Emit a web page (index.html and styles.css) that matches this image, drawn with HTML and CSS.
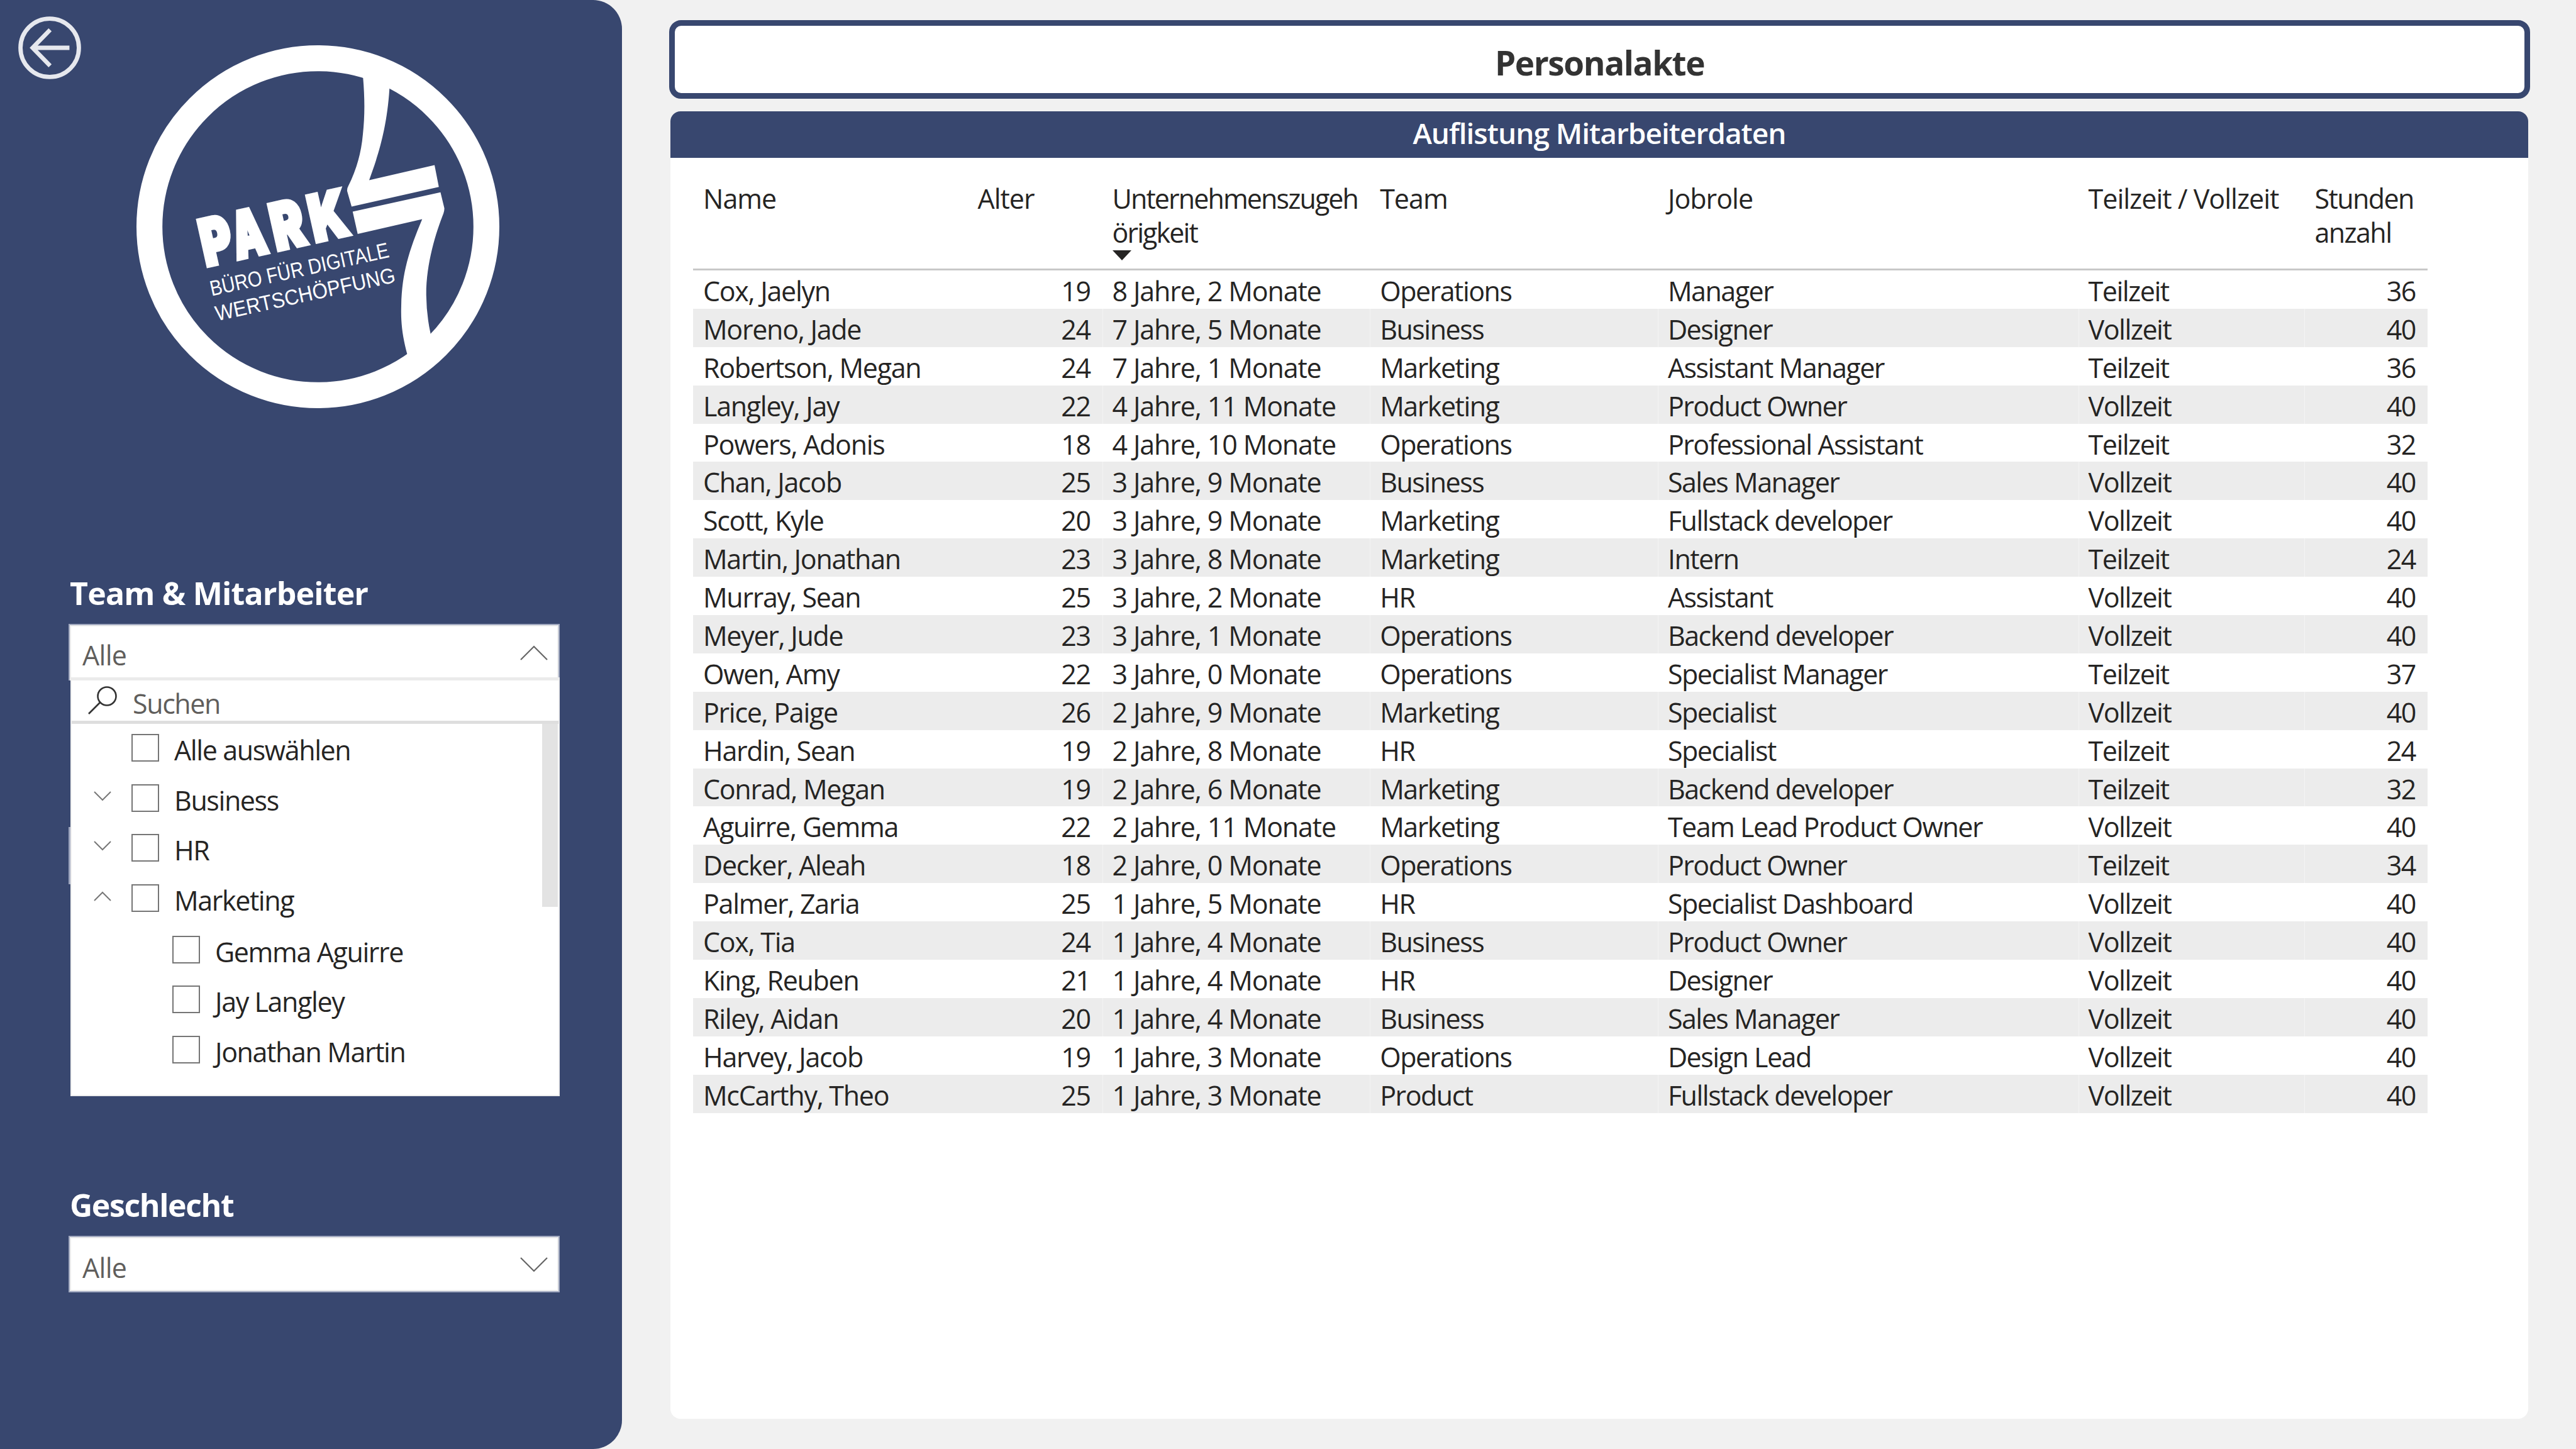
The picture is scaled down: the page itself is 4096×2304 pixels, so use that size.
FILE: index.html
```html
<!DOCTYPE html>
<html lang="de">
<head>
<meta charset="utf-8">
<title>Personalakte</title>
<link rel="stylesheet" href="styles.css">
</head>
<body>
<div class="report">
  <aside class="sidebar">
    <div class="brand">
      <svg class="back" viewBox="0 0 140 140" fill="none">
        <circle cx="70" cy="70" r="65"/>
        <path d="M114 70H31M71 30L32 70L71 110"/>
      </svg>
      <svg class="logo" viewBox="305 101 812 812">
        <circle class="ring" cx="711" cy="507" r="377"/>
        <path d="M812 173C816 220 816 260 811.600 300C808 342 797 380 779 416Q776 421 776.400 427L786.400 462L981.600 418L972 369L825.700 402.700C845 350 865 290 871 200L872 165L811 140Z"/>
        <path d="M788.800 473.300L985.300 430L994 466Q994 472 992 477C975 520 953 590 953.400 660Q954 705 963 746L965 790L911 830L911 793C901 755 896 725 897.500 683C899 610 915 560 944.300 490L800 523.300Z"/>
        <text class="wordmark" transform="translate(461 595) rotate(-12.500)"><tspan x="-1" textLength="69" lengthAdjust="spacingAndGlyphs">P</tspan><tspan x="71" textLength="74" lengthAdjust="spacingAndGlyphs">A</tspan><tspan x="161" textLength="73" lengthAdjust="spacingAndGlyphs">R</tspan><tspan x="249" textLength="83" lengthAdjust="spacingAndGlyphs">K</tspan></text>
        <text class="claim" transform="translate(473 662) rotate(-12.300)" textLength="409" lengthAdjust="spacingAndGlyphs">BÜRO FÜR DIGITALE</text>
        <text class="claim" transform="translate(485 718) rotate(-12.300)" textLength="411" lengthAdjust="spacingAndGlyphs">WERTSCHÖPFUNG</text>
      </svg>
    </div>

    <section class="slicer team">
      <h2>Team &amp; Mitarbeiter</h2>
      <div class="select"><span>Alle</span><svg class="caret" viewBox="0 0 44 24"><path d="M1 23L22 2L43 23"/></svg></div>
      <div class="popup">
        <div class="search"><svg class="glass" viewBox="0 0 48 48"><circle cx="31" cy="17" r="14.500"/><path d="M20 27L2 45"/></svg><span>Suchen</span></div>
        <div class="list">
          <ul class="items">
            <li><i class="exp"></i><i class="box"></i><span>Alle auswählen</span></li>
            <li><svg class="exp" viewBox="0 0 28 16"><path d="M1 1L14 14L27 1"/></svg><i class="box"></i><span>Business</span></li>
            <li><svg class="exp" viewBox="0 0 28 16"><path d="M1 1L14 14L27 1"/></svg><i class="box"></i><span>HR</span></li>
            <li><svg class="exp" viewBox="0 0 28 16"><path d="M1 15L14 2L27 15"/></svg><i class="box"></i><span>Marketing</span></li>
            <li class="child"><i class="box"></i><span>Gemma Aguirre</span></li>
            <li class="child"><i class="box"></i><span>Jay Langley</span></li>
            <li class="child"><i class="box"></i><span>Jonathan Martin</span></li>
          </ul>
          <div class="thumb"></div>
        </div>
      </div>
    </section>

    <section class="slicer gender">
      <h2>Geschlecht</h2>
      <div class="select"><span>Alle</span><svg class="caret" viewBox="0 0 44 24"><path d="M1 1L22 22L43 1"/></svg></div>
    </section>
  </aside>

  <main class="content">
    <h1 class="title">Personalakte</h1>
    <section class="card">
      <h2 class="card-head">Auflistung Mitarbeiterdaten</h2>
      <table class="grid">
        <thead>
          <tr><th>Name</th><th>Alter</th><th>Unternehmenszugeh<br>örigkeit<svg class="sort" viewBox="0 0 30 16"><path d="M0 0H30L15 16Z"/></svg></th><th>Team</th><th>Jobrole</th><th>Teilzeit / Vollzeit</th><th>Stunden<br>anzahl</th></tr>
        </thead>
        <tbody>
          <tr><td>Cox, Jaelyn</td><td>19</td><td>8 Jahre, 2 Monate</td><td>Operations</td><td>Manager</td><td>Teilzeit</td><td>36</td></tr>
          <tr><td>Moreno, Jade</td><td>24</td><td>7 Jahre, 5 Monate</td><td>Business</td><td>Designer</td><td>Vollzeit</td><td>40</td></tr>
          <tr><td>Robertson, Megan</td><td>24</td><td>7 Jahre, 1 Monate</td><td>Marketing</td><td>Assistant Manager</td><td>Teilzeit</td><td>36</td></tr>
          <tr><td>Langley, Jay</td><td>22</td><td>4 Jahre, 11 Monate</td><td>Marketing</td><td>Product Owner</td><td>Vollzeit</td><td>40</td></tr>
          <tr><td>Powers, Adonis</td><td>18</td><td>4 Jahre, 10 Monate</td><td>Operations</td><td>Professional Assistant</td><td>Teilzeit</td><td>32</td></tr>
          <tr><td>Chan, Jacob</td><td>25</td><td>3 Jahre, 9 Monate</td><td>Business</td><td>Sales Manager</td><td>Vollzeit</td><td>40</td></tr>
          <tr><td>Scott, Kyle</td><td>20</td><td>3 Jahre, 9 Monate</td><td>Marketing</td><td>Fullstack developer</td><td>Vollzeit</td><td>40</td></tr>
          <tr><td>Martin, Jonathan</td><td>23</td><td>3 Jahre, 8 Monate</td><td>Marketing</td><td>Intern</td><td>Teilzeit</td><td>24</td></tr>
          <tr><td>Murray, Sean</td><td>25</td><td>3 Jahre, 2 Monate</td><td>HR</td><td>Assistant</td><td>Vollzeit</td><td>40</td></tr>
          <tr><td>Meyer, Jude</td><td>23</td><td>3 Jahre, 1 Monate</td><td>Operations</td><td>Backend developer</td><td>Vollzeit</td><td>40</td></tr>
          <tr><td>Owen, Amy</td><td>22</td><td>3 Jahre, 0 Monate</td><td>Operations</td><td>Specialist Manager</td><td>Teilzeit</td><td>37</td></tr>
          <tr><td>Price, Paige</td><td>26</td><td>2 Jahre, 9 Monate</td><td>Marketing</td><td>Specialist</td><td>Vollzeit</td><td>40</td></tr>
          <tr><td>Hardin, Sean</td><td>19</td><td>2 Jahre, 8 Monate</td><td>HR</td><td>Specialist</td><td>Teilzeit</td><td>24</td></tr>
          <tr><td>Conrad, Megan</td><td>19</td><td>2 Jahre, 6 Monate</td><td>Marketing</td><td>Backend developer</td><td>Teilzeit</td><td>32</td></tr>
          <tr><td>Aguirre, Gemma</td><td>22</td><td>2 Jahre, 11 Monate</td><td>Marketing</td><td>Team Lead Product Owner</td><td>Vollzeit</td><td>40</td></tr>
          <tr><td>Decker, Aleah</td><td>18</td><td>2 Jahre, 0 Monate</td><td>Operations</td><td>Product Owner</td><td>Teilzeit</td><td>34</td></tr>
          <tr><td>Palmer, Zaria</td><td>25</td><td>1 Jahre, 5 Monate</td><td>HR</td><td>Specialist Dashboard</td><td>Vollzeit</td><td>40</td></tr>
          <tr><td>Cox, Tia</td><td>24</td><td>1 Jahre, 4 Monate</td><td>Business</td><td>Product Owner</td><td>Vollzeit</td><td>40</td></tr>
          <tr><td>King, Reuben</td><td>21</td><td>1 Jahre, 4 Monate</td><td>HR</td><td>Designer</td><td>Vollzeit</td><td>40</td></tr>
          <tr><td>Riley, Aidan</td><td>20</td><td>1 Jahre, 4 Monate</td><td>Business</td><td>Sales Manager</td><td>Vollzeit</td><td>40</td></tr>
          <tr><td>Harvey, Jacob</td><td>19</td><td>1 Jahre, 3 Monate</td><td>Operations</td><td>Design Lead</td><td>Vollzeit</td><td>40</td></tr>
          <tr><td>McCarthy, Theo</td><td>25</td><td>1 Jahre, 3 Monate</td><td>Product</td><td>Fullstack developer</td><td>Vollzeit</td><td>40</td></tr>
        </tbody>
      </table>
    </section>
  </main>
</div>
</body>
</html>
```
FILE: styles.css
```css
* { box-sizing: border-box; margin: 0; padding: 0; }
body {
  background: #f1f1f1;
  color: #252423;
  font-family: "Open Sans", "Noto Sans", sans-serif;
  font-size: 43px;
  letter-spacing: -1.4px;
}
.report { display: flex; width: 4096px; height: 2304px; overflow: hidden; }

/* sidebar */
.sidebar { width: 989px; height: 2304px; background: #38476f; border-radius: 0 46px 46px 0; display: flex; flex-direction: column; }
.brand { display: flex; align-items: flex-start; height: 905px; padding-left: 29px; }
.back { width: 100px; height: 100px; margin-top: 26px; stroke: #e6e8ee; stroke-width: 9.5; }
.logo { width: 577px; height: 577px; margin: 72px 0 0 88px; fill: #fff; overflow: visible; }
.ring { fill: none; stroke: #fff; stroke-width: 58; }
.wordmark { font-family: Inter, sans-serif; font-weight: 900; font-size: 142px; letter-spacing: 0; stroke: #fff; stroke-width: 10; stroke-linejoin: miter; }
.claim { font-family: "Liberation Sans", Arial, sans-serif; font-size: 48px; letter-spacing: 0; }

.slicer { width: 781px; margin-left: 109px; }
.slicer h2 { color: #fff; font-size: 50px; font-weight: 700; line-height: 68px; padding-left: 2px; letter-spacing: -0.8px; white-space: nowrap; }
.select {
  display: flex; align-items: center; justify-content: space-between;
  height: 90px; padding: 7px 17px 0 20px;
  background: #fff; border: 2px solid #a0a8bf; box-shadow: inset 0 0 0 2px #ededed;
  color: #605e5c; letter-spacing: -0.7px;
}
.caret { width: 44px; height: 24px; margin-top: -7px; fill: none; stroke: #666; stroke-width: 2.2; }
.team { position: relative; padding-top: 4px; }
.team .select { height: 90px; margin-top: 15px; border-bottom: 0; }
.team::before { content: ""; position: absolute; left: 0; top: 410px; width: 3px; height: 91px; background: #a0a8bf; }
.popup { position: relative; margin: -5px 0 0 3px; width: 778px; height: 666px; background: #fff; border: 2px solid #eee; border-top: 5px solid #ebebeb; }
.search { display: flex; align-items: center; height: 69px; padding-left: 25px; border-bottom: 5px solid #dedede; color: #605e5c; }
.glass { width: 48px; height: 48px; margin-right: 24px; fill: none; stroke: #333; stroke-width: 2.6; }
.search span { padding-top: 8px; }
.list { display: flex; justify-content: space-between; }
.items { list-style: none; margin-top: -2px; }
.items li { display: flex; align-items: center; height: 79.7px; padding-left: 35px; white-space: nowrap; }
.items span { padding-top: 7px; }
.exp { width: 28px; height: 16px; margin: -6px 32px 0 0; fill: none; stroke: #777; stroke-width: 2; }
.box { width: 44px; height: 44px; margin-right: 24px; border: 2.6px solid #757575; }
.items .child { padding-left: 160px; position: relative; top: 2px; }
.thumb { width: 25px; height: 291px; margin-right: 1px; background: #e3e3e3; }
.gender { padding-top: 139px; }
.slicer.gender h2 { letter-spacing: -1.4px; }
.gender .select { margin-top: 15px; padding-top: 10px; }
.gender .caret { margin-top: -8px; }

/* content */
.content { margin-left: 75px; padding-top: 32px; }
.title { width: 2959px; height: 125px; border: 9px solid #38476f; border-radius: 19px; background: #fff; color: #333; text-align: center; font-size: 53px; line-height: 117px; letter-spacing: -1.4px; }
.card { width: 2954px; height: 2079px; margin: 20px 0 0 2px; background: #fff; border-radius: 16px; overflow: hidden; }
.card-head { height: 74px; background: #38476f; color: #fff; text-align: center; font-size: 46px; font-weight: 600; line-height: 69px; letter-spacing: -1px; }
.grid { display: block; margin-left: 36px; width: 2758px; }
.grid thead, .grid tbody { display: block; }
.grid tr { display: grid; grid-template-columns: 436.5px 214px 425.7px 457.7px 668.7px 359.9px 195.5px; height: 60.9px; }
.grid thead tr { height: 179px; border-bottom: 3px solid #c8c8c8; }
.grid th { font-weight: 400; text-align: left; line-height: 54.4px; padding: 38px 0 0 16px; letter-spacing: -1px; white-space: nowrap; }
.grid th:nth-child(3) { letter-spacing: -1.9px; }
.grid th:last-child { letter-spacing: -1.6px; }
.grid td { line-height: 60.9px; padding: 3px 16px 0; height: 60.9px; letter-spacing: -1.5px; white-space: nowrap; }
.grid td:first-child { letter-spacing: -1.3px; }
.grid td:nth-child(3) { letter-spacing: -1.15px; }
.grid td:nth-child(2), .grid td:last-child { text-align: right; padding-right: 19px; }
.grid tbody tr:nth-child(even) { background: #ececec; }
.grid tbody tr:nth-child(even) td:nth-child(n+3) { box-shadow: inset 1px 0 #f4f4f4; }
.sort { display: block; width: 30px; height: 16px; fill: #252423; }
```
